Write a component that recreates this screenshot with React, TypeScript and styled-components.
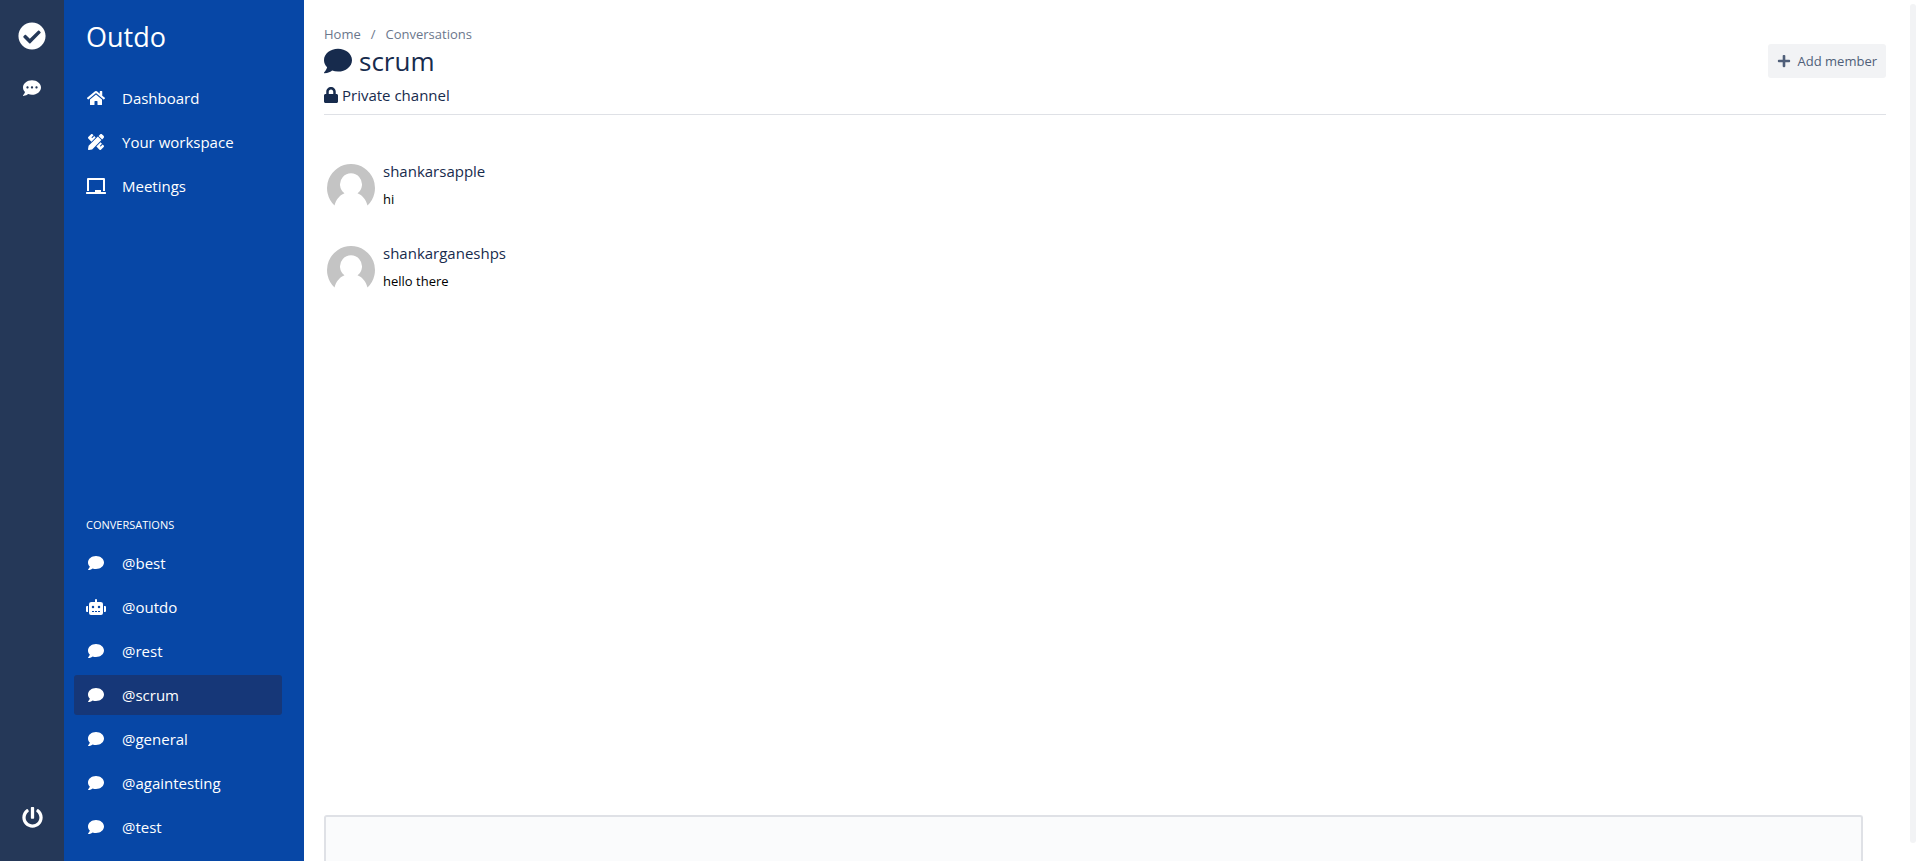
import React from "react";
import styled, { createGlobalStyle } from "styled-components";
import {
  FaChalkboard,
  FaCheckCircle,
  FaComment,
  FaCommentDots,
  FaHome,
  FaLock,
  FaPencilRuler,
  FaPlus,
  FaPowerOff,
  FaRobot,
} from "react-icons/fa";

const GlobalStyle = createGlobalStyle`
  *, *::before, *::after { box-sizing: border-box; }
  body {
    margin: 0;
    background: #ffffff;
    color: #172b4d;
    font-family: "Open Sans", "Noto Sans", sans-serif;
    font-size: 15px;
    line-height: 20px;
  }
  a { color: inherit; text-decoration: none; }
  h1, h2, p, ul, ol { margin: 0; padding: 0; font-weight: 400; }
  ul, ol { list-style: none; }
  button { border: 0; font: inherit; cursor: pointer; }
  svg { display: block; flex: none; }
`;

const Shell = styled.div`
  display: flex;
  height: 100vh;
  overflow: hidden;
`;

const Rail = styled.nav`
  display: flex;
  flex: none;
  flex-direction: column;
  align-items: center;
  width: 64px;
  padding: 16px 0 24px;
  background: #253858;
`;

const RailButton = styled.button<{ $pinned?: boolean }>`
  display: grid;
  place-items: center;
  width: 40px;
  height: 40px;
  padding: 0;
  margin-top: ${(p) => (p.$pinned ? "auto" : "0")};
  background: none;
  color: #ffffff;
`;

const RailStack = styled.div`
  display: grid;
  gap: 12px;
`;

const Sidebar = styled.aside`
  display: flex;
  flex: none;
  flex-direction: column;
  width: 240px;
  padding: 17px 22px 14px 10px;
  background: #0747a6;
  color: #ffffff;
`;

const Brand = styled.h2`
  padding: 0 12px;
  font-size: 27px;
  line-height: 40px;
`;

const NavList = styled.ul`
  display: grid;
  gap: 4px;
  margin-top: 21px;
`;

const NavLink = styled.a<{ $active?: boolean }>`
  display: flex;
  align-items: center;
  gap: 16px;
  height: 40px;
  padding: 0 12px;
  border-radius: 3px;
  background: ${(p) => (p.$active ? "#163778" : "transparent")};
  font-weight: 500;
`;

const NavIcon = styled.span`
  flex: none;

  svg {
    width: 20px;
    height: 16px;
  }
`;

const Conversations = styled.section`
  margin-top: auto;

  ${NavList} {
    margin-top: 8px;
  }
`;

const SectionTitle = styled.h2`
  padding: 0 12px;
  font-size: 11px;
  line-height: 20px;
  text-transform: uppercase;
`;

const Main = styled.main`
  display: flex;
  flex: 1;
  flex-direction: column;
  min-width: 0;
  padding: 24px 20px 0;
`;

const Header = styled.header`
  display: flex;
  align-items: flex-start;
  justify-content: space-between;
  padding-bottom: 8px;
  border-bottom: 1px solid #dfe1e6;
`;

const Crumbs = styled.ol`
  display: flex;
  gap: 10px;
  color: #6b778c;
  font-size: 13px;
`;

const Title = styled.h1`
  display: flex;
  align-items: center;
  gap: 7px;
  font-size: 26px;
  line-height: 34px;
`;

const Privacy = styled.p`
  display: flex;
  align-items: center;
  gap: 4px;
  margin-top: 6px;
  line-height: 22px;

  svg {
    width: 14px;
    height: 16px;
  }
`;

const AddButton = styled.button`
  display: flex;
  align-items: center;
  gap: 7px;
  height: 34px;
  margin-top: 20px;
  padding: 0 9px;
  border-radius: 3px;
  background: #f2f3f5;
  color: #505f79;
  font-size: 13px;
  font-weight: 500;
`;

const Messages = styled.ul`
  flex: 1;
  min-height: 0;
  padding: 46px 3px 0;
`;

const Message = styled.li`
  display: flex;
  gap: 8px;
  height: 82px;
`;

const Avatar = styled.svg`
  width: 48px;
  height: 48px;
  margin-top: 3px;
`;

const Author = styled.p`
  line-height: 20px;
`;

const Body = styled.p`
  margin-top: 8px;
  color: #000000;
  font-size: 13px;
`;

const Composer = styled.textarea`
  display: block;
  flex: none;
  height: 46px;
  margin-right: 23px;
  border: 2px solid #dfe1e6;
  border-bottom: 0;
  border-radius: 3px 3px 0 0;
  background: #fafbfc;
  font: inherit;
  resize: none;
`;

const ScrollTrack = styled.div`
  flex: none;
  width: 6px;
  margin: 4px 4px 18px;
  border-radius: 3px;
  background: #f2f3f5;
`;

const pages = [
  { label: "Dashboard", Icon: FaHome },
  { label: "Your workspace", Icon: FaPencilRuler },
  { label: "Meetings", Icon: FaChalkboard },
];

const channels = ["best", "outdo", "rest", "scrum", "general", "againtesting", "test"];

const messages = [
  { author: "shankarsapple", text: "hi" },
  { author: "shankarganeshps", text: "hello there" },
];

function DefaultAvatar() {
  return (
    <Avatar viewBox="0 0 48 48" aria-hidden="true">
      <path
        fill="#c4c4c4"
        d="M24 0a24 24 0 0 1 16.500 41.400C39 36 36 31.500 30.500 29.200a11 11 0 1 0-13 0C12 31.500 9 36 7.500 41.400A24 24 0 0 1 24 0z"
      />
    </Avatar>
  );
}

export default function App() {
  return (
    <Shell>
      <GlobalStyle />
      <Rail aria-label="Global">
        <RailStack>
          <RailButton aria-label="Outdo home">
            <FaCheckCircle size={28} />
          </RailButton>
          <RailButton aria-label="Messages">
            <FaCommentDots size={18} />
          </RailButton>
        </RailStack>
        <RailButton $pinned aria-label="Log out">
          <FaPowerOff size={21} />
        </RailButton>
      </Rail>

      <Sidebar>
        <Brand>Outdo</Brand>
        <NavList>
          {pages.map(({ label, Icon }) => (
            <li key={label}>
              <NavLink href="#">
                <NavIcon>
                  <Icon />
                </NavIcon>
                {label}
              </NavLink>
            </li>
          ))}
        </NavList>
        <Conversations>
          <SectionTitle>Conversations</SectionTitle>
          <NavList>
            {channels.map((name) => (
              <li key={name}>
                <NavLink href="#" $active={name === "scrum"}>
                  <NavIcon>{name === "outdo" ? <FaRobot /> : <FaComment />}</NavIcon>
                  <span>@{name}</span>
                </NavLink>
              </li>
            ))}
          </NavList>
        </Conversations>
      </Sidebar>

      <Main>
        <Header>
          <div>
            <Crumbs>
              <li>
                <a href="#">Home</a>
              </li>
              <li aria-hidden="true">/</li>
              <li>
                <a href="#">Conversations</a>
              </li>
            </Crumbs>
            <Title>
              <FaComment size={28} />
              scrum
            </Title>
            <Privacy>
              <FaLock />
              Private channel
            </Privacy>
          </div>
          <AddButton>
            <FaPlus size={14} />
            Add member
          </AddButton>
        </Header>
        <Messages>
          {messages.map(({ author, text }) => (
            <Message key={author}>
              <DefaultAvatar />
              <div>
                <Author>{author}</Author>
                <Body>{text}</Body>
              </div>
            </Message>
          ))}
        </Messages>
        <Composer aria-label="Message scrum" />
      </Main>
      <ScrollTrack />
    </Shell>
  );
}
